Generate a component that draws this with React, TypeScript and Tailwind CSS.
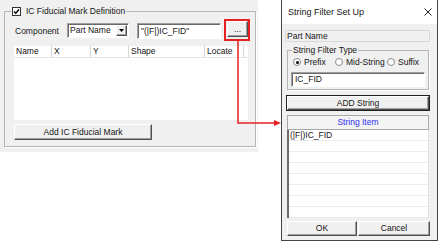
const raised =
  "bg-[#f0f0f0] border border-t-white border-l-white border-b-[#505050] border-r-[#505050] shadow-[inset_-1px_-1px_0_#a0a0a0]";
const sunken =
  "bg-white border border-t-[#a0a0a0] border-l-[#a0a0a0] border-b-white border-r-white shadow-[inset_1px_1px_0_#696969]";

function Checkbox() {
  return (
    <span className="w-[9px] h-[9px] border border-[#333] bg-white flex items-center justify-center">
      <svg width="7" height="7" viewBox="0 0 7 7">
        <path d="M1 3.5 L2.8 5.3 L6 1.5" fill="none" stroke="#000" strokeWidth="1.4" />
      </svg>
    </span>
  );
}

function Radio({ checked, label, width }: { checked?: boolean; label: string; width?: string }) {
  return (
    <div className={`flex items-center gap-[3px] ${width ?? ""}`}>
      <span className="w-[8px] h-[8px] rounded-full border border-[#8a8a8a] bg-white flex items-center justify-center shrink-0">
        {checked && <span className="w-[3px] h-[3px] rounded-full bg-black" />}
      </span>
      <span>{label}</span>
    </div>
  );
}

const columns = [
  { name: "Name", w: "w-[38px]" },
  { name: "X", w: "w-[39px]" },
  { name: "Y", w: "w-[38px]" },
  { name: "Shape", w: "w-[76px]" },
  { name: "Locate", w: "w-[39px]" },
];

const rows = ["(|F|)IC_FID", "", "", "", "", "", "", ""];

export default function App() {
  return (
    <div className="relative w-[439px] h-[247px] bg-white flex overflow-hidden font-['Liberation_Sans',Arial,sans-serif] text-[8.5px] leading-none text-[#151515]">
      {/* left: fiducial definition panel */}
      <div className="w-[258px] h-[152px] bg-[#f0f0f0] pt-[5px] pl-[4px] shrink-0">
        <fieldset className="w-[252px] h-[142px] border border-[#b5b5b5] shadow-[1px_1px_0_#fff]">
          <legend className="ml-[6px] px-[1px] h-[12px] flex items-center gap-[5px]">
            <Checkbox />
            <span>IC Fiducial Mark Definition</span>
          </legend>

          <div className="flex items-start mt-[2px] pl-[10px]">
            <span className="w-[52px] mt-[8px]">Component</span>
            <div className={`${sunken} w-[62px] h-[15px] mt-[4px] flex items-center justify-between pl-[2px] pr-[1px]`}>
              <span>Part Name</span>
              <span className={`${raised} w-[11px] h-[11px] flex items-center justify-center`}>
                <svg width="5" height="3" viewBox="0 0 5 3">
                  <path d="M0 0 H5 L2.5 3 Z" fill="#000" />
                </svg>
              </span>
            </div>
            <div className={`${sunken} w-[84px] h-[16px] mt-[4px] ml-[8px] flex items-center pl-[3px]`}>
              "(|F|)IC_FID"
            </div>
            <div className="ml-[3px] border-2 border-[#e52222] pl-[1px] pb-[2px]">
              <div className={`${raised} w-[21px] h-[16px] flex items-center justify-center`}>...</div>
            </div>
          </div>

          <div className="ml-[9px] mt-[5px] w-[234px] bg-white">
            <div className="flex h-[12px] border-b border-[#e5e5e5]">
              {columns.map((c) => (
                <div key={c.name} className={`${c.w} h-full border-r border-[#d5d5d5] flex items-center pl-[2px]`}>
                  {c.name}
                </div>
              ))}
            </div>
            <div className="h-[62px]" />
          </div>

          <div className={`${raised} ml-[9px] mt-[4px] w-[138px] h-[16px] flex items-center justify-center`}>
            Add IC Fiducial Mark
          </div>
        </fieldset>
      </div>

      {/* right: string filter dialog */}
      <div className="ml-[23px] w-[157px] h-[241px] border-x border-b border-[#3f4a3f] bg-[#f0f0f0] flex flex-col shrink-0">
        <div className="h-[24px] bg-white flex items-center justify-between pl-[6px] pr-[5px]">
          <span className="text-[9px]">String Filter Set Up</span>
          <svg width="8" height="8" viewBox="0 0 8 8">
            <path d="M0.5 0.5 L7.5 7.5 M7.5 0.5 L0.5 7.5" stroke="#222" strokeWidth="1" />
          </svg>
        </div>

        <div className="flex flex-col">
          <div className="ml-[3px] mt-[6px] w-[145px] h-[12px] border border-[#d8d8d8] flex items-center pl-[1px]">
            Part Name
          </div>

          <fieldset className="ml-[5px] mt-[2px] w-[142px] h-[46px] border border-[#b5b5b5] shadow-[1px_1px_0_#fff]">
            <legend className="ml-[4px] px-[1px] h-[12px] flex items-center">String Filter Type</legend>
            <div className="flex items-center h-[10px] mt-[1px] pl-[5px]">
              <Radio checked label="Prefix" width="w-[42px]" />
              <Radio label="Mid-String" width="w-[52px]" />
              <Radio label="Suffix" />
            </div>
            <div className={`${sunken} ml-[3px] mt-[5px] w-[134px] h-[15px] flex items-center pl-[3px]`}>IC_FID</div>
          </fieldset>

          <div className="ml-[4px] mt-[5px] w-[144px] h-[16px] border border-[#202020]">
            <div className={`${raised} w-full h-full flex items-center justify-center`}>ADD String</div>
          </div>

          <div className="ml-[5px] mt-[4px] w-[142px]">
            <div className="h-[15px] border border-[#a8a8a8] bg-[#f4f4f4] flex items-center justify-center text-[#2f2ff0]">
              String Item
            </div>
            <div className="h-[88px] bg-white border-l-2 border-l-[#6b6b6b] border-r border-r-[#e0e0e0]">
              {rows.map((r, i) => (
                <div key={i} className="h-[11px] border-b border-[#ececec] flex items-center pl-[1px]">
                  {r}
                </div>
              ))}
            </div>
          </div>

          <div className="ml-[5px] mt-[3px] flex gap-[1px]">
            <div className={`${raised} w-[70px] h-[15px] flex items-center justify-center`}>OK</div>
            <div className={`${raised} w-[72px] h-[15px] flex items-center justify-center`}>Cancel</div>
          </div>
        </div>
      </div>

      {/* red callout connector */}
      <svg className="absolute left-0 top-0 pointer-events-none" width="439" height="247">
        <path d="M238 41 V123 H275" fill="none" stroke="#e52222" strokeWidth="1.5" />
        <path d="M274 120 L281 123 L274 126 Z" fill="#e52222" />
      </svg>
    </div>
  );
}
